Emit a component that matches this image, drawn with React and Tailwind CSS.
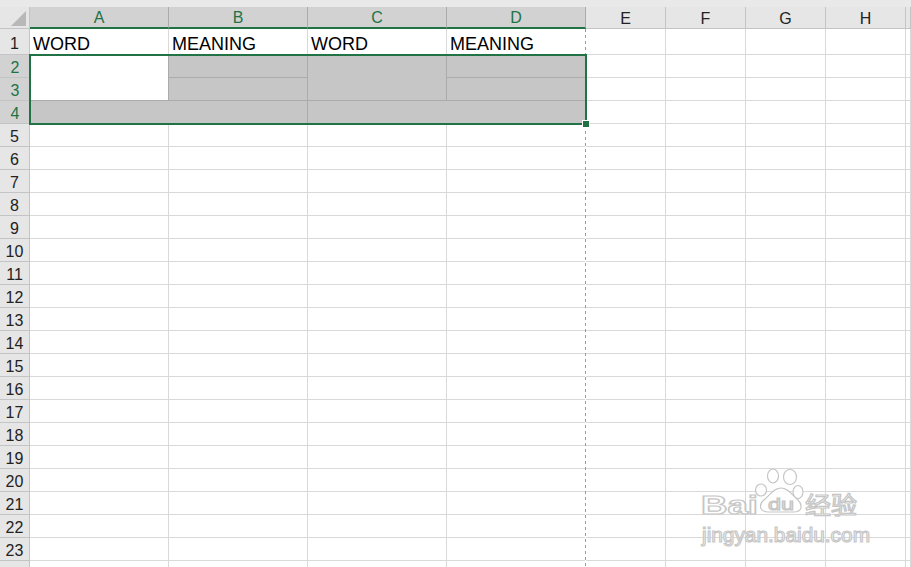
import React from "react";

const GRID = "border-r border-b border-[#d9d9d9]";
const HEAD = "bg-[#e6e6e6] border-r border-b border-[#c4c4c4] text-[#222] text-[16px]";
const HEAD_SEL = "bg-[#d2d2d2] border-r border-[#ababab] text-[#217346] text-[16px]";
const SEL = "bg-[#c6c6c6] border-r border-b border-[#ababab]";

const Corner = () => (
  <div className="bg-[#e6e6e6] border-r border-b border-[#c4c4c4] relative">
    <svg width="30" height="22" className="absolute left-0 top-0">
      <polygon points="26,4 26,19 11,19" fill="#b8b8b8" />
    </svg>
  </div>
);

const ColHead = ({ label, selected }) => (
  <div
    className={`flex items-center justify-center pt-[2px] ${
      selected ? `${HEAD_SEL} border-b-2 border-b-[#217346]` : HEAD
    }`}
  >
    {label}
  </div>
);

const RowHead = ({ n, selected }) => (
  <div
    className={`flex items-center justify-center pt-[4px] ${
      selected ? "bg-[#d2d2d2] border-b border-[#c4c4c4] text-[#217346] text-[16px]" : HEAD
    }`}
  >
    {n}
  </div>
);

const Text = ({ children }) => (
  <div className={`${GRID} flex items-center pl-[3px] pt-[6px] text-[18px] text-black`}>{children}</div>
);

const Watermark = () => (
  <svg
    width="200"
    height="90"
    className="absolute left-[690px] top-[465px]"
    fill="#ffffff"
    fillOpacity="0.8"
    stroke="#c6c6c6"
    strokeWidth="1.2"
  >
    <ellipse cx="83" cy="11" rx="5.5" ry="7" />
    <ellipse cx="100" cy="12" rx="6.5" ry="7.5" />
    <ellipse cx="71" cy="25" rx="5.5" ry="6" />
    <ellipse cx="108" cy="27" rx="5" ry="6.5" />
    <path d="M91 23 C84 23 80 30 74 35 C68 40 70 47 78 47 L104 47 C112 47 113 40 108 35 C102 30 98 23 91 23 Z" />
    <text x="78" y="45" fontSize="17" fontFamily="'Liberation Sans', sans-serif" textLength="26" lengthAdjust="spacingAndGlyphs">du</text>
    <text x="11" y="49" fontSize="25" fontWeight="bold" fontFamily="'Liberation Sans', sans-serif" textLength="57" lengthAdjust="spacingAndGlyphs">Bai</text>
    <text x="115" y="49" fontSize="24" fontFamily="'Noto Sans CJK SC', sans-serif" textLength="52" lengthAdjust="spacingAndGlyphs">经验</text>
    <text x="12" y="77" fontSize="21" fontFamily="'Liberation Sans', sans-serif" textLength="168" lengthAdjust="spacingAndGlyphs">jingyan.baidu.com</text>
  </svg>
);

export default function App() {
  const restCols = ["E", "F", "G", "H", ""];
  const plainRows = Array.from({ length: 20 }, (_, i) => i + 5);

  return (
    <div className="relative w-[911px] h-[567px] overflow-hidden bg-white font-['Liberation_Sans',Arial,sans-serif] select-none">
      <div className="h-[7px] bg-[#e9e9e9]" />
      <div className="grid grid-cols-[30px_139px_139px_139px_139px_80px_80px_80px_80px_1fr] grid-rows-[22px_26px_repeat(23,23px)]">
        {/* header */}
        <Corner />
        {["A", "B", "C", "D"].map((c) => (
          <ColHead key={c} label={c} selected />
        ))}
        {restCols.map((c, i) => (
          <ColHead key={"h" + i} label={c} />
        ))}

        {/* row 1 */}
        <RowHead n={1} />
        <Text>WORD</Text>
        <Text>MEANING</Text>
        <Text>WORD</Text>
        <Text>MEANING</Text>
        {restCols.map((c, i) => (
          <div key={"r1" + i} className={GRID} />
        ))}

        {/* row 2 */}
        <RowHead n={2} selected />
        <div className="row-span-2 bg-white border-r border-b border-[#ababab]" />
        <div className={SEL} />
        <div className={`row-span-2 ${SEL}`} />
        <div className={SEL} />
        {restCols.map((c, i) => (
          <div key={"r2" + i} className={GRID} />
        ))}

        {/* row 3 */}
        <RowHead n={3} selected />
        <div className={SEL} />
        <div className={SEL} />
        {restCols.map((c, i) => (
          <div key={"r3" + i} className={GRID} />
        ))}

        {/* row 4 */}
        <RowHead n={4} selected />
        <div className={`col-span-2 ${SEL}`} />
        <div className={`col-span-2 ${SEL}`} />
        {restCols.map((c, i) => (
          <div key={"r4" + i} className={GRID} />
        ))}

        {plainRows.map((r) => (
          <React.Fragment key={r}>
            {/* row 24 only peeks in under the bottom edge */}
            <RowHead n={r < 24 ? r : ""} />
            {Array.from({ length: 9 }, (_, i) => (
              <div key={i} className={GRID} />
            ))}
          </React.Fragment>
        ))}
      </div>

      {/* page break line */}
      <div className="absolute left-[585px] top-[29px] bottom-0 w-px bg-[repeating-linear-gradient(to_bottom,#9a9a9a_0_3px,#ffffff_3px_6px)]" />

      {/* selection */}
      <div className="absolute left-[29px] top-[54px] w-[558px] h-[71px] border-2 border-[#217346]" />
      <div className="absolute left-[582px] top-[120px] w-[8px] h-[8px] bg-[#217346] border border-white" />

      <Watermark />
    </div>
  );
}
